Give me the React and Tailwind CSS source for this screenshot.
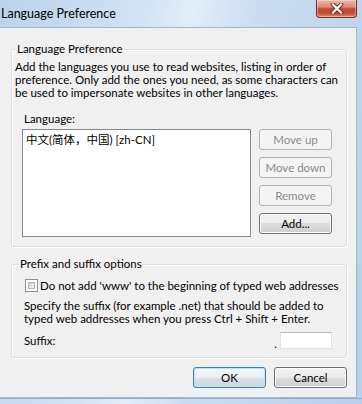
function Btn({ children, disabled, isDefault, className = "" }) {
  const base =
    "h-[21px] w-[73px] rounded-[3px] border flex items-center justify-center text-[11.5px] leading-none shrink-0 ";
  if (disabled)
    return (
      <div className={base + "border-[#adb2b5] bg-[#f4f4f4] text-[#8a8a8a] " + className}>{children}</div>
    );
  if (isDefault)
    return (
      <div
        className={
          base +
          "border-[#3c7fb1] bg-[linear-gradient(#f4f8fb,#e9eef2_50%,#dbe2e8_50%,#cdd5dc)] shadow-[inset_0_0_0_1px_#b8e4f8] text-black " +
          className
        }
      >
        {children}
      </div>
    );
  return (
    <div
      className={
        base +
        "border-[#707070] bg-[linear-gradient(#f2f2f2,#ebebeb_50%,#dddddd_50%,#cfcfcf)] shadow-[inset_0_0_0_1px_#fcfcfc] text-black " +
        className
      }
    >
      {children}
    </div>
  );
}

function CloseButton() {
  return (
    <div className="w-[41px] h-[18px] rounded-b-[4px] border border-t-0 border-[#7a2b20] bg-[linear-gradient(#ecb6a8,#dc8d7a_40%,#c5472f_52%,#c54c35_78%,#df8a6d)] shadow-[inset_0_0_0_1px_rgba(255,255,255,0.35)] flex items-center justify-center">
      <svg width="14" height="11" viewBox="0 0 14 11">
        <path d="M3 1.5 L11 9.5 M11 1.5 L3 9.5" stroke="#6b1f14" strokeWidth="4" strokeLinecap="square" />
        <path d="M3 1.5 L11 9.5 M11 1.5 L3 9.5" stroke="#ffffff" strokeWidth="2.3" strokeLinecap="square" />
      </svg>
    </div>
  );
}

function Group({ label, labelLeft, className = "", children }) {
  return (
    <div
      className={
        "relative border border-[#d5dfe5] rounded-[3px] shadow-[inset_1px_1px_0_#ffffff,1px_1px_0_#ffffff] shrink-0 " +
        className
      }
    >
      <span
        className={
          "absolute top-[-8px] px-[1px] bg-[#f0f0f0] leading-[13px] text-[11.5px] whitespace-nowrap " + labelLeft
        }
      >
        {label}
      </span>
      {children}
    </div>
  );
}

export default function App() {
  return (
    <div className="w-[362px] h-[404px] overflow-hidden flex flex-col bg-[linear-gradient(100deg,#bcd3ec_0%,#cfe0f2_30%,#e2edf8_45%,#cadcf0_60%,#b8d0ea_100%)] font-['Lato','Noto_Sans_CJK_SC',sans-serif] text-black">
      <div className="h-[27px] flex items-start justify-between pr-[5px] shrink-0">
        <span className="text-[12.5px] leading-[27px] pl-[1px] whitespace-nowrap">Language Preference</span>
        <CloseButton />
      </div>
      <div className="flex flex-1 min-h-0">
        <div className="w-[357px] h-[371px] bg-[#f0f0f0] border-t border-r border-b border-[#a3b8cf] flex flex-col pl-[11px] pr-[9px] pt-[21px] text-[11.5px]">
          <Group label="Language Preference" labelLeft="left-[4px]" className="h-[198px]">
            <div className="flex flex-col">
              <p className="mt-[10px] pl-[3px] leading-[13px] whitespace-nowrap">
                Add the languages you use to read websites, listing in order of
                <br />
                preference. Only add the ones you need, as some characters can
                <br />
                be used to impersonate websites in other languages.
              </p>
              <div className="mt-[13px] ml-[12px] leading-[13px]">Language:</div>
              <div className="mt-[4px] flex">
                <div className="ml-[10px] w-[229px] h-[108px] border border-[#828790] bg-white px-[3px] pt-[2px] leading-[16px] whitespace-nowrap">
                  中文(简体，中国) [zh-CN]
                </div>
                <div className="ml-[8px] flex flex-col gap-[7px]">
                  <Btn disabled>Move up</Btn>
                  <Btn disabled>Move down</Btn>
                  <Btn disabled>Remove</Btn>
                  <Btn>Add...</Btn>
                </div>
              </div>
            </div>
          </Group>
          <Group label="Prefix and suffix options" labelLeft="left-[7px]" className="mt-[17px] h-[94px]">
            <div className="flex flex-col">
              <div className="mt-[14px] ml-[13px] flex items-center h-[13px]">
                <div className="w-[13px] h-[13px] border border-[#8e8f8f] bg-white p-[2px] shrink-0">
                  <div className="w-full h-full bg-[linear-gradient(135deg,#cbcfd5,#f6f6f6)] border border-[#b0b5bb]" />
                </div>
                <span className="ml-[2px] leading-[13px] whitespace-nowrap">
                  Do not add 'www' to the beginning of typed web addresses
                </span>
              </div>
              <p className="mt-[7px] ml-[12px] leading-[13px] whitespace-nowrap">
                Specify the suffix (for example .net) that should be added to
                <br />
                typed web addresses when you press Ctrl + Shift + Enter.
              </p>
              <div className="mt-[7px] ml-[12px] flex items-center h-[17px]">
                <span className="leading-[13px]">Suffix:</span>
                <span className="ml-auto leading-[13px] mt-[6px]">.</span>
                <div className="ml-[3px] mr-[14px] w-[52px] h-[17px] bg-white border border-[#dfe3e9] border-t-[#b5b8bd]" />
              </div>
            </div>
          </Group>
          <div className="mt-[9px] flex justify-end gap-[8px] pr-[0px]">
            <Btn isDefault>OK</Btn>
            <Btn>Cancel</Btn>
          </div>
        </div>
        <div className="flex-1" />
      </div>
      <div className="h-[6px] shrink-0 border-t border-[#8eaed0]" />
    </div>
  );
}
